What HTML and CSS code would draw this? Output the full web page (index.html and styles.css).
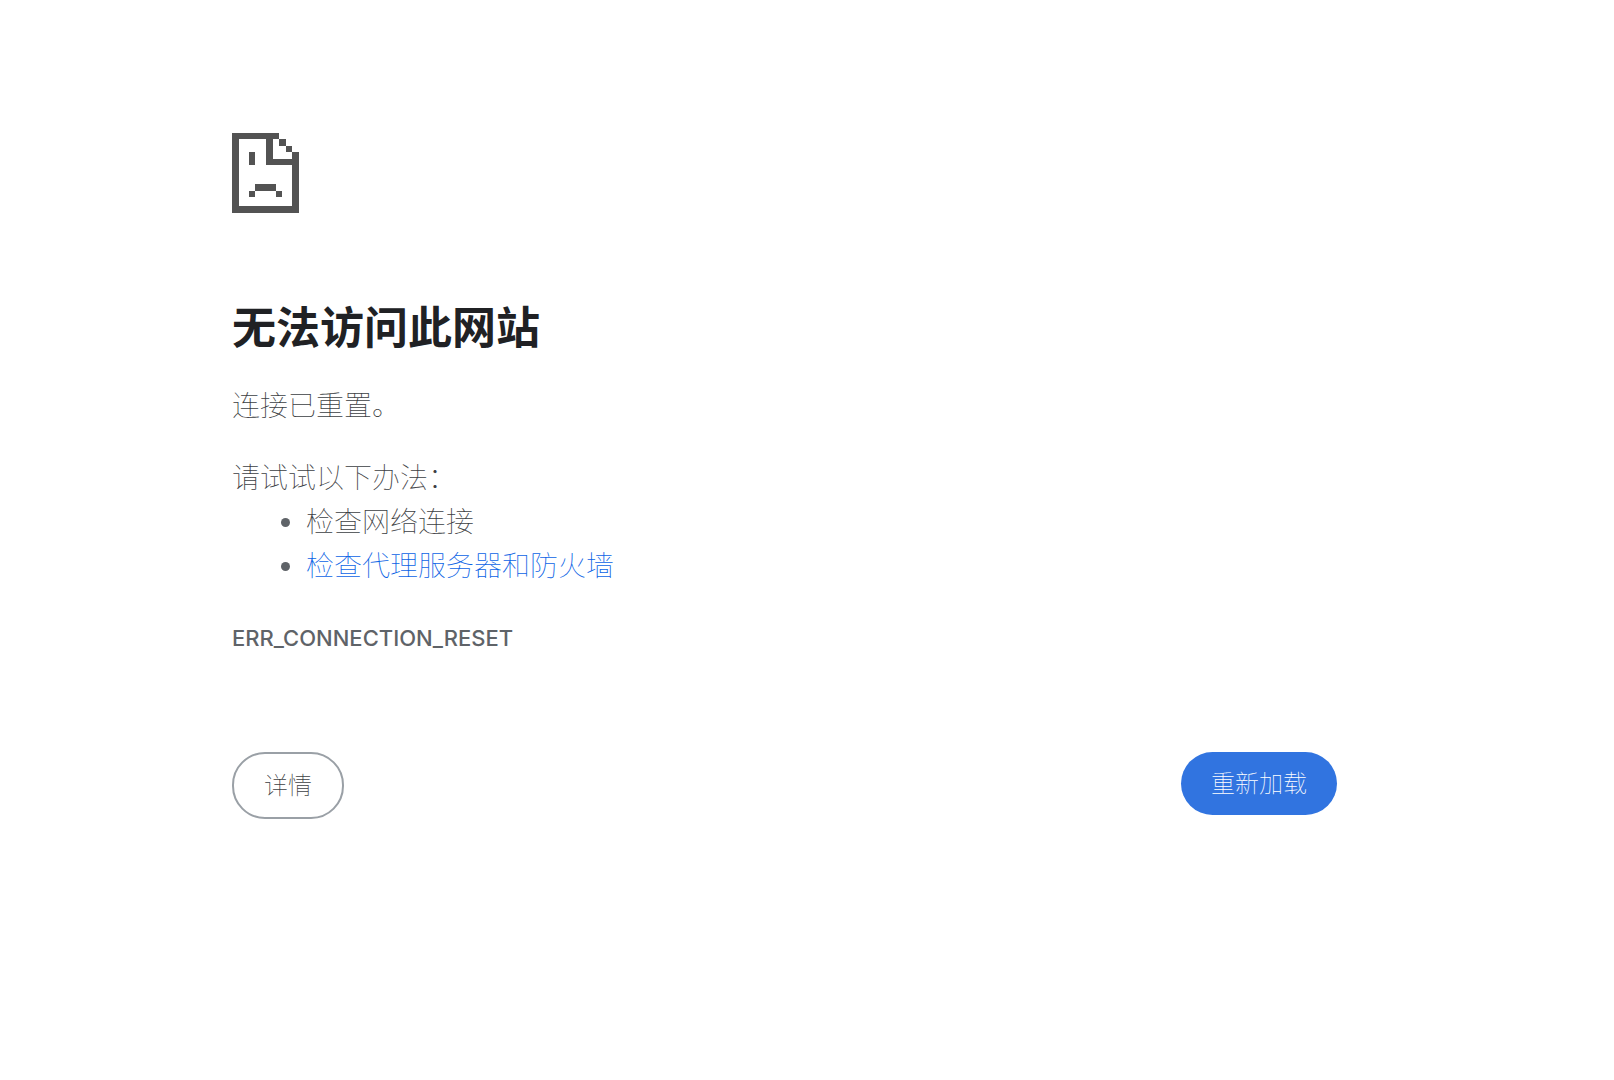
FILE: index.html
```html
<!DOCTYPE html>
<html lang="zh-CN">
<head>
  <meta charset="UTF-8" />
  <title>无法访问此网站</title>
  <meta name="viewport" content="width=device-width, initial-scale=1" />
  <link rel="stylesheet" href="styles.css">
</head>
<body>
  <main class="error-page">
    <!-- Sad page icon -->
    <svg class="error-icon" viewBox="0 0 201 240" shape-rendering="crispEdges" aria-hidden="true">
      <path d="M0 0H141V18H122V78H181V57H201V240H0ZM21 18V220H181V96H102V18Z" fill-rule="evenodd" />
      <path d="M141 18h21v21h-21zM162 39h19v18h-19z" />
      <path d="M51 57h18v39H51zM69 153h63v21H69zM51 174h18v18H51zM132 174h18v18h-18z" />
    </svg>

    <h1>无法访问此网站</h1>
    <p class="summary">连接已重置。</p>

    <div class="suggestions">
      <p>请试试以下办法：</p>
      <ul>
        <li>检查网络连接</li>
        <li><a href="#buttons">检查代理服务器和防火墙</a></li>
      </ul>
    </div>

    <p class="error-code">ERR_CONNECTION_RESET</p>

    <div class="buttons" id="buttons">
      <button type="button" class="button details">详情</button>
      <button type="button" class="button reload">重新加载</button>
    </div>
  </main>
</body>
</html>
```
FILE: styles.css
```css
:root {
  --text-color: #3c4043;
  --muted-color: #5f6368;
  --heading-color: #202124;
  --primary-color: #3174e0;
}

body {
  margin: 0;
  background: #fff;
  color: var(--text-color);
  font-family: Inter, "Noto Sans CJK SC", sans-serif;
  font-size: 28px;
  font-weight: 100;
  line-height: 44px;
}

.error-page {
  padding: 133px 277px 40px 232px;
}

.error-icon {
  display: block;
  width: 67px;
  height: 80px;
  fill: #535353;
}

h1 {
  margin: 87px 0 28px;
  color: var(--heading-color);
  font-size: 44px;
  font-weight: 700;
  line-height: 56px;
}

p {
  margin: 0;
}

.suggestions {
  margin: 28px 0;
}

ul {
  margin: 0;
  padding-left: 74px;
}

li::marker {
  color: var(--muted-color);
}

a {
  color: #0b63e5;
  text-decoration: none;
}

.error-code {
  color: var(--muted-color);
  font-size: 22px;
  font-weight: 500;
}

.buttons {
  display: flex;
  justify-content: space-between;
  align-items: flex-start;
  margin-top: 92px;
}

.button {
  padding: 14px 30px;
  border: 0;
  border-radius: 33px;
  font-family: inherit;
  font-size: 24px;
  font-weight: 100;
  line-height: 35px;
}

.details {
  border: 2px solid #9aa0a6;
  background: #fff;
  color: var(--text-color);
}

.reload {
  background: var(--primary-color);
  color: #fff;
}
```
